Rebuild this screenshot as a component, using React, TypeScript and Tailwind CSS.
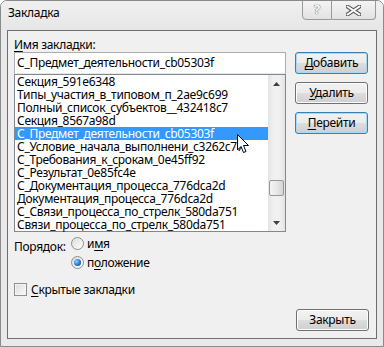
import React from 'react'

const items = [
  'Секция_591e6348',
  'Типы_участия_в_типовом_п_2ae9c699',
  'Полный_список_субъектов__432418c7',
  'Секция_8567a98d',
  'С_Предмет_деятельности_cb05303f',
  'С_Условие_начала_выполнени_c3262c77',
  'С_Требования_к_срокам_0e45ff92',
  'С_Результат_0e85fc4e',
  'С_Документация_процесса_776dca2d',
  'Документация_процесса_776dca2d',
  'С_Связи_процесса_по_стрелк_580da751',
  'Связи_процесса_по_стрелк_580da751',
]

function WinButton({ children, focused = false }: { children: React.ReactNode; focused?: boolean }) {
  return (
    <div
      className={
        'h-[22px] w-[73px] rounded-[3px] border flex items-center justify-center bg-[linear-gradient(#f2f2f2_0%,#ebebeb_50%,#dddddd_51%,#cfcfcf_100%)] ' +
        (focused ? 'border-[#3c7fb1] shadow-[inset_0_0_0_1px_#a7d9f5]' : 'border-[#707070] shadow-[inset_0_0_0_1px_#fcfcfc]')
      }
    >
      {children}
    </div>
  )
}

function Radio({ checked = false }: { checked?: boolean }) {
  return (
    <div className="w-[13px] h-[13px] rounded-full border border-[#8e8f8f] bg-[linear-gradient(135deg,#dcdcdc,#ffffff)] flex items-center justify-center">
      {checked && <div className="w-[7px] h-[7px] rounded-full bg-[radial-gradient(circle_at_35%_35%,#8fd1ff,#1c6fc4_60%,#0f4f94)]" />}
    </div>
  )
}

export default function App() {
  return (
    <div className="w-[384px] h-[347px] bg-[#e9e9e9] font-['Noto_Sans',sans-serif] text-[12px] tracking-[-0.3px] text-black flex flex-col rounded-t-[7px] border border-[#8a8a8a] overflow-hidden relative">
      {/* title bar */}
      <div className="h-[29px] flex items-start shrink-0 bg-[linear-gradient(#f0f0f0,#e6e6e6)]">
        <div className="pl-[7px] pt-[4px] leading-[16px]">Закладка</div>
        <div className="ml-auto mr-[7px] flex h-[20px] -mt-px">
          <div className="w-[30px] h-[20px] border border-[#9a9a9a] rounded-bl-[4px] bg-[linear-gradient(#f4f4f4,#e2e2e2)] flex items-center justify-center text-[13px] font-bold text-white [text-shadow:0_0_1px_#555,0_0_1px_#555]">
            ?
          </div>
          <div className="w-[44px] h-[20px] border border-l-0 border-[#9a9a9a] rounded-br-[4px] bg-[linear-gradient(#f4f4f4,#e2e2e2)] flex items-center justify-center">
            <svg width="15" height="11" viewBox="0 0 15 11">
              <path d="M1.5 1.5 L13.5 9.5 M13.5 1.5 L1.5 9.5" stroke="#5a5a5a" strokeWidth="4" strokeLinecap="round" />
              <path d="M1.5 1.5 L13.5 9.5 M13.5 1.5 L1.5 9.5" stroke="#ffffff" strokeWidth="2" strokeLinecap="round" />
            </svg>
          </div>
        </div>
      </div>

      {/* client area */}
      <div className="mx-[6px] mb-[7px] flex-1 border border-[#6f6f6f] bg-[#f0f0f0] flex flex-col pl-[6px] pr-[7px] pb-[7px]">
        <div className="flex">
          <div className="w-[272px] flex flex-col">
            <div className="pt-[6px] h-[21px] leading-[15px]">
              <span className="underline underline-offset-[2px]">И</span>мя закладки:
            </div>
            <div className="h-[22px] border border-[#abadb3] border-b-[#e3e9ef] bg-white pl-[2px] leading-[20px] whitespace-nowrap overflow-hidden">
              С_Предмет_деятельности_cb05303f
            </div>
            <div className="h-[158px] border border-[#828790] bg-white flex">
              <div className="flex-1 flex flex-col">
                {items.map((t, i) => (
                  <div
                    key={t}
                    className={
                      'h-[13px] leading-[13px] pl-[2px] whitespace-nowrap ' +
                      (i === 4 ? 'bg-[#3399ff] text-white' : '')
                    }
                  >
                    {t}
                  </div>
                ))}
              </div>
              <div className="w-[17px] bg-[linear-gradient(90deg,#e3e3e3,#f0f0f0_30%,#f0f0f0_70%,#e3e3e3)] flex flex-col items-center">
                <div className="h-[17px] flex items-center justify-center">
                  <svg width="7" height="4" viewBox="0 0 7 4">
                    <path d="M0 4 L3.5 0 L7 4 Z" fill="#404040" />
                  </svg>
                </div>
                <div className="mt-[88px] w-[15px] h-[16px] rounded-[2px] border border-[#979797] bg-[linear-gradient(90deg,#f3f3f3,#e8e8e8_50%,#d6d6d6)]" />
                <div className="mt-auto h-[17px] flex items-center justify-center">
                  <svg width="7" height="4" viewBox="0 0 7 4">
                    <path d="M0 0 L7 0 L3.5 4 Z" fill="#404040" />
                  </svg>
                </div>
              </div>
            </div>
          </div>
          <div className="ml-[9px] pt-[21px] flex flex-col gap-[8px]">
            <WinButton focused>
              <span>
                <span className="underline underline-offset-[2px]">Д</span>обавить
              </span>
            </WinButton>
            <WinButton>
              <span>
                <span className="underline underline-offset-[2px]">У</span>далить
              </span>
            </WinButton>
            <WinButton focused>
              <span>
                <span className="underline underline-offset-[2px]">П</span>ерейти
              </span>
            </WinButton>
          </div>
        </div>

        {/* order */}
        <div className="mt-[5px] flex">
          <div className="w-[57px] leading-[15px] pt-[2px]">Порядок:</div>
          <div className="flex flex-col gap-[6px]">
            <div className="flex items-center gap-[3px] h-[13px]">
              <Radio />
              <span className="leading-[15px]">
                и<span className="underline underline-offset-[2px]">м</span>я
              </span>
            </div>
            <div className="flex items-center gap-[3px] h-[13px]">
              <Radio checked />
              <span className="leading-[15px]">
                п<span className="underline underline-offset-[2px]">о</span>ложение
              </span>
            </div>
          </div>
        </div>

        <div className="mt-[13px] flex items-center gap-[4px]">
          <div className="w-[13px] h-[13px] border border-[#8e8f8f] bg-[linear-gradient(135deg,#dcdcdc,#fafafa)] shadow-[inset_0_0_0_1px_#f4f4f4]" />
          <span className="leading-[15px]">
            <span className="underline underline-offset-[2px]">С</span>крытые закладки
          </span>
        </div>

        <div className="mt-auto flex justify-end">
          <WinButton>Закрыть</WinButton>
        </div>
      </div>

      {/* mouse pointer */}
      <svg className="absolute left-[236px] top-[133px]" width="13" height="20" viewBox="0 0 13 20">
        <path d="M0.5 0.5 L0.5 16 L4 12.5 L6.5 18.5 L9 17.5 L6.5 11.5 L11.5 11.5 Z" fill="#ffffff" stroke="#000000" strokeWidth="1" strokeLinejoin="round" />
      </svg>
    </div>
  )
}
